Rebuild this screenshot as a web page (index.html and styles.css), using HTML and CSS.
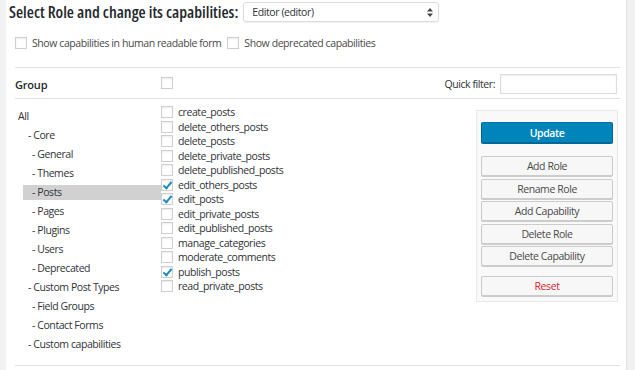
FILE: index.html
```html
<!DOCTYPE html>
<html lang="en">
<head>
    <meta charset="UTF-8">
    <title>User Role Editor</title>
    <link rel="stylesheet" href="styles.css">
</head>
<body>
    <div class="page">
        <div class="edge-left"></div>
        <div class="content">
            <div class="role-row">
                <h2 class="role-title">Select Role and change its capabilities:</h2>
                <div class="select-wrap">
                    <select class="role-select">
                        <option>Editor (editor)</option>
                    </select>
                    <svg class="select-arrows" width="6" height="9" viewBox="0 0 6 9">
                        <path d="M0 3.5 L3 0 L6 3.5 Z M0 5.5 L3 9 L6 5.5 Z" fill="#444"/>
                    </svg>
                </div>
            </div>

            <div class="options">
                <label class="option"><input type="checkbox" class="cb"> Show capabilities in human readable form</label>
                <label class="option"><input type="checkbox" class="cb"> Show deprecated capabilities</label>
            </div>

            <div class="caps-section">
                <div class="caps-header">
                    <div class="group-label">Group</div>
                    <div><input type="checkbox" class="cb"></div>
                    <div class="quick-filter">
                        <label for="quick-filter">Quick filter:</label>
                        <input type="text" id="quick-filter">
                    </div>
                </div>

                <div class="caps-body">
                    <ul class="group-list">
                        <li class="lvl0">All</li>
                        <li class="lvl1">- Core</li>
                        <li class="lvl2">- General</li>
                        <li class="lvl2">- Themes</li>
                        <li class="lvl2 selected">- Posts</li>
                        <li class="lvl2">- Pages</li>
                        <li class="lvl2">- Plugins</li>
                        <li class="lvl2">- Users</li>
                        <li class="lvl2">- Deprecated</li>
                        <li class="lvl1">- Custom Post Types</li>
                        <li class="lvl2">- Field Groups</li>
                        <li class="lvl2">- Contact Forms</li>
                        <li class="lvl1">- Custom capabilities</li>
                    </ul>

                    <div class="cap-list">
                        <label class="cap"><input type="checkbox" class="cb"> create_posts</label>
                        <label class="cap"><input type="checkbox" class="cb"> delete_others_posts</label>
                        <label class="cap"><input type="checkbox" class="cb"> delete_posts</label>
                        <label class="cap"><input type="checkbox" class="cb"> delete_private_posts</label>
                        <label class="cap"><input type="checkbox" class="cb"> delete_published_posts</label>
                        <label class="cap"><input type="checkbox" class="cb" checked> edit_others_posts</label>
                        <label class="cap"><input type="checkbox" class="cb" checked> edit_posts</label>
                        <label class="cap"><input type="checkbox" class="cb"> edit_private_posts</label>
                        <label class="cap"><input type="checkbox" class="cb"> edit_published_posts</label>
                        <label class="cap"><input type="checkbox" class="cb"> manage_categories</label>
                        <label class="cap"><input type="checkbox" class="cb"> moderate_comments</label>
                        <label class="cap"><input type="checkbox" class="cb" checked> publish_posts</label>
                        <label class="cap"><input type="checkbox" class="cb"> read_private_posts</label>
                    </div>

                    <div class="toolbar">
                        <button class="btn btn-primary">Update</button>
                        <div class="btn-group">
                            <button class="btn">Add Role</button>
                            <button class="btn">Rename Role</button>
                            <button class="btn">Add Capability</button>
                            <button class="btn">Delete Role</button>
                            <button class="btn">Delete Capability</button>
                        </div>
                        <button class="btn btn-reset">Reset</button>
                    </div>
                </div>
            </div>
        </div>
        <div class="edge-right"></div>
    </div>
</body>
</html>
```

FILE: styles.css
```css
:root {
    --text-color: #2f3337;
    --muted-color: #4a4a4a;
    --line-color: #e1e1e1;
    --edge-bg: #f1f1f1;
    --primary: #0085ba;
    --check: #1e8cbe;
}

* {
    box-sizing: border-box;
}

body {
    margin: 0;
    font-family: "Open Sans", "Liberation Sans", sans-serif;
    font-size: 10.5px;
    letter-spacing: -0.42px;
    color: var(--text-color);
    background-color: #ffffff;
}

.page {
    display: flex;
    height: 370px;
    overflow: hidden;
}

.edge-left {
    width: 6px;
    background-color: var(--edge-bg);
}

.edge-right {
    width: 9px;
    background-color: var(--edge-bg);
    border-left: 1px solid #e4e4e4;
}

.content {
    flex: 1;
    padding: 2px 6px 0 3px;
}

/* role selector */
.role-row {
    display: flex;
    align-items: center;
    gap: 5px;
    height: 20px;
}

.role-title {
    margin: 0;
    font-size: 16.4px;
    line-height: 20px;
    font-weight: 600;
    font-stretch: 75%;
    letter-spacing: 0;
    color: #23282d;
}

.select-wrap {
    position: relative;
}

.role-select {
    display: block;
    appearance: none;
    width: 196px;
    height: 20px;
    padding: 0 8px;
    font-family: inherit;
    font-size: 10.5px;
    letter-spacing: inherit;
    color: var(--text-color);
    background-color: #ffffff;
    border: 1px solid #dddddd;
    border-radius: 3px;
    box-shadow: 0 1px 1px rgba(0,0,0,0.06);
}

.select-arrows {
    position: absolute;
    right: 6px;
    top: 6px;
}

.options {
    display: flex;
    align-items: center;
    gap: 6px;
    margin: 14px 0 0 6px;
}

.option {
    display: flex;
    align-items: center;
    gap: 5px;
    color: var(--muted-color);
}

/* checkboxes */
.cb {
    appearance: none;
    position: relative;
    width: 12px;
    height: 12px;
    margin: 0;
    flex: none;
    background-color: #ffffff;
    border: 1px solid #cfcfcf;
    box-shadow: inset 0 1px 2px rgba(0,0,0,0.08);
}

.cb:checked::before {
    content: "";
    position: absolute;
    left: 3px;
    top: 0;
    width: 3px;
    height: 7px;
    border: solid var(--check);
    border-width: 0 2px 2px 0;
    transform: rotate(40deg);
}

/* capabilities table */
.caps-section {
    margin: 17px 0 0 6px;
    border-top: 1px solid var(--line-color);
    border-bottom: 1px solid var(--line-color);
}

.caps-header {
    display: grid;
    grid-template-columns: 146px 1fr auto;
    align-items: center;
    height: 31px;
    padding-top: 2px;
    border-bottom: 1px solid var(--line-color);
}

.group-label {
    font-size: 11px;
    font-weight: 600;
    letter-spacing: -0.2px;
    color: #23282d;
}

.quick-filter {
    display: flex;
    align-items: center;
    gap: 5px;
    margin-right: 3px;
}

.quick-filter input {
    width: 117px;
    height: 20px;
    border: 1px solid #dddddd;
    box-shadow: inset 0 1px 2px rgba(0,0,0,0.07);
}

.caps-body {
    display: grid;
    grid-template-columns: 146px 1fr 144px;
    align-items: start;
    height: 266px;
}

.group-list {
    list-style: none;
    margin: 0;
    padding: 10px 0 0 3px;
}

.group-list li {
    height: 15px;
    line-height: 15px;
    margin-bottom: 4px;
    color: var(--text-color);
}

.group-list .lvl0 {
    padding-left: 0;
}

.group-list .lvl1 {
    padding-left: 10px;
}

.group-list .lvl2 {
    padding-left: 14px;
}

.group-list .selected {
    margin-left: 5px;
    padding-left: 9px;
    background-color: #d1d1d1;
}

.cap-list {
    display: flex;
    flex-direction: column;
    padding-top: 6px;
}

.cap {
    display: flex;
    align-items: center;
    gap: 5px;
    height: 14.5px;
    color: var(--text-color);
}

/* action buttons */
.toolbar {
    display: flex;
    flex-direction: column;
    margin: 11px 2px 0 0;
    padding: 11px 4px 5px 4px;
    background-color: #f9f9f9;
    border: 1px solid #e8e8e8;
}

.btn {
    height: 20px;
    font-family: inherit;
    font-size: 10.5px;
    letter-spacing: inherit;
    color: var(--muted-color);
    background-color: #f7f7f7;
    border: 1px solid #cccccc;
    border-radius: 2px;
    box-shadow: 0 1px 0 #cccccc;
}

.btn-primary {
    height: 21px;
    margin-bottom: 13px;
    font-weight: 600;
    color: #ffffff;
    background-color: var(--primary);
    border-color: #0073aa #006799 #006799;
    box-shadow: 0 1px 0 #006799;
}

.btn-group {
    display: flex;
    flex-direction: column;
    gap: 2.5px;
}

.btn-reset {
    margin-top: 10px;
    color: #e0202a;
}
```
